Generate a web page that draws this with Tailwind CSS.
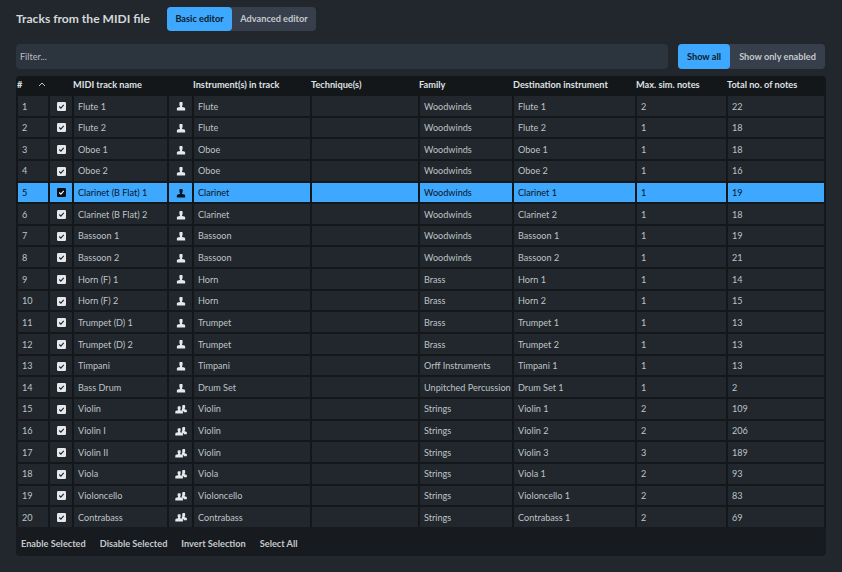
<!doctype html>
<html>
<head>
  <meta charset="UTF-8">
  <script src="https://cdn.jsdelivr.net/npm/@tailwindcss/browser@4"></script>
</head>
<body class="bg-[#21272c] w-[842px] h-[572px] overflow-hidden font-['Lato',sans-serif] text-[#bfc3c6] text-[9.1px] whitespace-nowrap">
  <div class="px-4 pt-[7px]">
    <!-- Title -->
    <div class="flex items-center h-[24px] gap-[17px]">
      <h1 class="w-[134px] pt-px text-[12.1px] font-bold text-[#d5d8da]">Tracks from the MIDI file</h1>
      <div class="flex h-[24px] bg-[#363f4b] rounded-[4px] font-bold text-[9.2px]">
        <button class="w-[65px] bg-[#3ea8ff] text-[#0c1a26] rounded-[4px]">Basic editor</button>
        <button class="w-[84px] text-[#c5c9cc]">Advanced editor</button>
      </div>
    </div>

    <!-- Filter -->
    <div class="flex mt-[13px] h-[25px] justify-between w-[809px]">
      <div class="w-[652px] bg-[#2c343e] rounded-[4px] pl-1 pt-px flex items-center text-[#b9bdc1]">Filter...</div>
      <div class="flex w-[147px] bg-[#363f4b] rounded-[4px] font-bold text-[9.2px]">
        <button class="w-[52px] bg-[#3ea8ff] text-[#0c1a26] rounded-[4px]">Show all</button>
        <button class="flex-1 text-[#c5c9cc]">Show only enabled</button>
      </div>
    </div>

    <!-- Table -->
    <div id="table" class="mt-[7px] w-[810px] bg-[#14171a] rounded-t-[4px] px-[2px]">
      <div class="grid h-[20px] pb-[3px] items-center font-bold text-[9.2px] text-[#dfe1e3] grid-cols-[30px_22px_93px_23px_116px_106px_92px_121px_89px_96px] gap-x-[2px]">
        <div class="-ml-[1px]">#</div>
        <div class="-ml-[12px]">
          <svg class="w-[8px] h-[5px]" viewBox="0 0 8 5" fill="none" stroke="#c5c9cc" stroke-width="1"><path d="M1 4l3-3 3 3"/></svg>
        </div>
        <div class="-ml-[1px]">MIDI track name</div>
        <div></div>
        <div class="-ml-[1px]">Instrument(s) in track</div>
        <div class="-ml-[1px]">Technique(s)</div>
        <div class="-ml-[1px]">Family</div>
        <div class="-ml-[1px]">Destination instrument</div>
        <div class="-ml-[1px]">Max. sim. notes</div>
        <div class="-ml-[1px]">Total no. of notes</div>
      </div>
      <div id="rows" class="flex flex-col gap-y-[2px]">
        <script>
          const data = [
            ['Flute 1','Flute','Woodwinds','Flute 1',2,22,0],
            ['Flute 2','Flute','Woodwinds','Flute 2',1,18,0],
            ['Oboe 1','Oboe','Woodwinds','Oboe 1',1,18,0],
            ['Oboe 2','Oboe','Woodwinds','Oboe 2',1,16,0],
            ['Clarinet (B Flat) 1','Clarinet','Woodwinds','Clarinet 1',1,19,0],
            ['Clarinet (B Flat) 2','Clarinet','Woodwinds','Clarinet 2',1,18,0],
            ['Bassoon 1','Bassoon','Woodwinds','Bassoon 1',1,19,0],
            ['Bassoon 2','Bassoon','Woodwinds','Bassoon 2',1,21,0],
            ['Horn (F) 1','Horn','Brass','Horn 1',1,14,0],
            ['Horn (F) 2','Horn','Brass','Horn 2',1,15,0],
            ['Trumpet (D) 1','Trumpet','Brass','Trumpet 1',1,13,0],
            ['Trumpet (D) 2','Trumpet','Brass','Trumpet 2',1,13,0],
            ['Timpani','Timpani','Orff Instruments','Timpani 1',1,13,0],
            ['Bass Drum','Drum Set','Unpitched Percussion','Drum Set 1',1,2,0],
            ['Violin','Violin','Strings','Violin 1',2,109,1],
            ['Violin I','Violin','Strings','Violin 2',2,206,1],
            ['Violin II','Violin','Strings','Violin 3',3,189,1],
            ['Viola','Viola','Strings','Viola 1',2,93,1],
            ['Violoncello','Violoncello','Strings','Violoncello 1',2,83,1],
            ['Contrabass','Contrabass','Strings','Contrabass 1',2,69,1],
          ];
          const one = '<path d="M6.400 2.800h3.200l.5.800v3.200l-.7 1.400v1.200l3.200.7.9.9v2.900H2.500V11l.9-.9 3.200-.7V8.200L5.900 6.800V3.600z"/>';
          const two = '<path d="M4.700 4.200h2.300l.5.800v2.600l-.6 1.200v.8l3 .8.700.8v2.700H.4v-2.700l.7-.8 3-.8v-.8l-.6-1.200V5z"/><path d="M10.700 2.800h2.300l.5.800v2.600l-.6 1.200v.8l2.300.7.600.8v2.600h-4l-.3-1.300-2.500-.8V8.400l.6-.7V3.600z"/>';
          document.currentScript.parentElement.innerHTML = data.map((r, i) => {
            const sel = i === 4;
            const cell = sel ? 'bg-[#3ea8ff] text-[#07131d] pt-px' : 'bg-[#21272c] pt-px';
            const check = sel
              ? '<svg class="w-[9px] h-[9px]" viewBox="0 0 10 10"><rect width="10" height="10" rx="1.500" fill="#0a0f14"/><path d="M2.500 5l1.800 1.800 3.200-3.500" fill="none" stroke="#fff" stroke-width="1.200"/></svg>'
              : '<svg class="w-[9px] h-[9px]" viewBox="0 0 10 10"><rect width="10" height="10" rx="1.500" fill="#e6e8ea"/><path d="M2.500 5l1.800 1.800 3.200-3.500" fill="none" stroke="#1c2126" stroke-width="1.200"/></svg>';
            const vals = [r[1], '', r[2], r[3], r[4], r[5]];
            return '<div class="grid h-[19.650px] items-stretch grid-cols-[30px_22px_93px_23px_116px_106px_92px_121px_89px_96px] gap-x-[2px]">'
              + '<div class="' + cell + ' pl-1 flex items-center">' + (i + 1) + '</div>'
              + '<div class="' + cell + ' flex items-center justify-center">' + check + '</div>'
              + '<div class="' + cell + ' pl-1 flex items-center">' + r[0] + '</div>'
              + '<div class="' + cell + ' flex items-center justify-center"><svg class="w-[12px] h-[12px]" viewBox="0 0 16 16" fill="' + (sel ? '#07131d' : '#e6e8ea') + '">' + (r[6] ? two : one) + '</svg></div>'
              + vals.map(v => '<div class="' + cell + ' pl-1 flex items-center">' + v + '</div>').join('')
              + '</div>';
          }).join('');
        </script>
      </div>
    </div>

    <!-- Footer -->
    <div class="w-[810px] h-[29px] bg-[#171b1f] rounded-b-[4px] flex items-center gap-[14px] pl-[5px] pt-[6px] font-bold text-[9.2px] text-[#c5c9cc]">
      <span>Enable Selected</span>
      <span>Disable Selected</span>
      <span>Invert Selection</span>
      <span>Select All</span>
    </div>
  </div>
</body>
</html>
